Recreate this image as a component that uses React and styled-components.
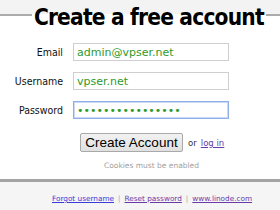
import React from 'react'
import styled, { createGlobalStyle } from 'styled-components'

const GlobalStyle = createGlobalStyle`
  html, body {
    margin: 0;
    padding: 0;
    background: #fff;
  }
  body {
    font-family: 'DejaVu Sans', Verdana, sans-serif;
    width: 280px;
    height: 210px;
    overflow: hidden;
  }
`

const Page = styled.div`
  width: 280px;
  height: 210px;
  display: flex;
  flex-direction: column;
`

const Header = styled.div`
  display: flex;
  align-items: flex-start;
  height: 36px;
  background: linear-gradient(#f3f3f3 0, #f3f3f3 14px, #fff 14px);
`

const Rule = styled.div`
  flex: ${p => p.$grow} 1 0;
  height: 2px;
  margin-top: 14px;
  background: #ababab;
`

const Title = styled.h1`
  margin: 4px 2px 0;
  font-family: 'DejaVu Sans Condensed', 'DejaVu Sans', sans-serif;
  font-size: 22.5px;
  font-weight: bold;
  line-height: 26px;
  letter-spacing: -0.8px;
  color: #000;
  white-space: nowrap;
`

const Form = styled.form`
  display: grid;
  grid-template-columns: 63px 156px;
  column-gap: 10px;
  row-gap: 11px;
  align-items: center;
  margin-top: 7px;
`

const Label = styled.label`
  text-align: right;
  font-family: 'DejaVu Sans Condensed', 'DejaVu Sans', sans-serif;
  font-size: 10.5px;
  color: #111;
`

const Input = styled.input`
  box-sizing: border-box;
  width: 156px;
  height: 18px;
  padding: 0 3px;
  border: 1px solid ${p => (p.$focus ? '#8fb0e6' : '#cfcfcf')};
  box-shadow: ${p => (p.$focus ? 'inset 0 0 0 1px #c9daf5' : 'none')};
  outline: none;
  font-family: 'DejaVu Sans', sans-serif;
  font-size: 11px;
  color: #2f9a2b;
  background: #fff;
`

const Actions = styled.div`
  display: flex;
  align-items: center;
  padding-left: 80px;
  margin-top: 14px;
  gap: 4px;
  font-family: 'DejaVu Sans Condensed', 'DejaVu Sans', sans-serif;
  font-size: 9.5px;
  color: #333;
`

const Button = styled.button`
  box-sizing: border-box;
  height: 19px;
  width: 103px;
  margin-right: 1px;
  padding: 0;
  border: 1px solid #a9a9a9;
  border-radius: 2px;
  background: linear-gradient(#f2f2f2, #e0e0e0);
  font-family: 'Liberation Sans', Arial, sans-serif;
  font-size: 13.5px;
  color: #000;
`

const Link = styled.a`
  color: ${p => (p.$visited ? '#6a3aa6' : '#3b3bd6')};
  text-decoration: underline;
`

const Note = styled.div`
  margin-top: 9px;
  padding-left: 104px;
  font-size: 7.5px;
  color: #a0a0a0;
`

const Footer = styled.footer`
  margin-top: auto;
  box-sizing: border-box;
  height: 31px;
  padding: 5px 0 0 52px;
  border-top: 3px solid #a3a3a3;
  background: #f5f5f5;
  display: flex;
  align-items: center;
  gap: 4px;
  font-size: 7.3px;
  color: #aaa;
`

export default function App() {
  return (
    <Page>
      <GlobalStyle />
      <Header>
        <Rule $grow={9} />
        <Title>Create a free account</Title>
        <Rule $grow={4} />
      </Header>
      <Form onSubmit={e => e.preventDefault()}>
        <Label>Email</Label>
        <Input defaultValue="admin@vpser.net" />
        <Label>Username</Label>
        <Input defaultValue="vpser.net" />
        <Label>Password</Label>
        <Input type="password" defaultValue="vpservpservpser1" $focus />
      </Form>
      <Actions>
        <Button>Create Account</Button>
        <span>or</span>
        <Link href="#" $visited>log in</Link>
      </Actions>
      <Note>Cookies must be enabled</Note>
      <Footer>
        <Link href="#">Forgot username</Link>
        <span>|</span>
        <Link href="#" $visited>Reset password</Link>
        <span>|</span>
        <Link href="#" $visited>www.linode.com</Link>
      </Footer>
    </Page>
  )
}
